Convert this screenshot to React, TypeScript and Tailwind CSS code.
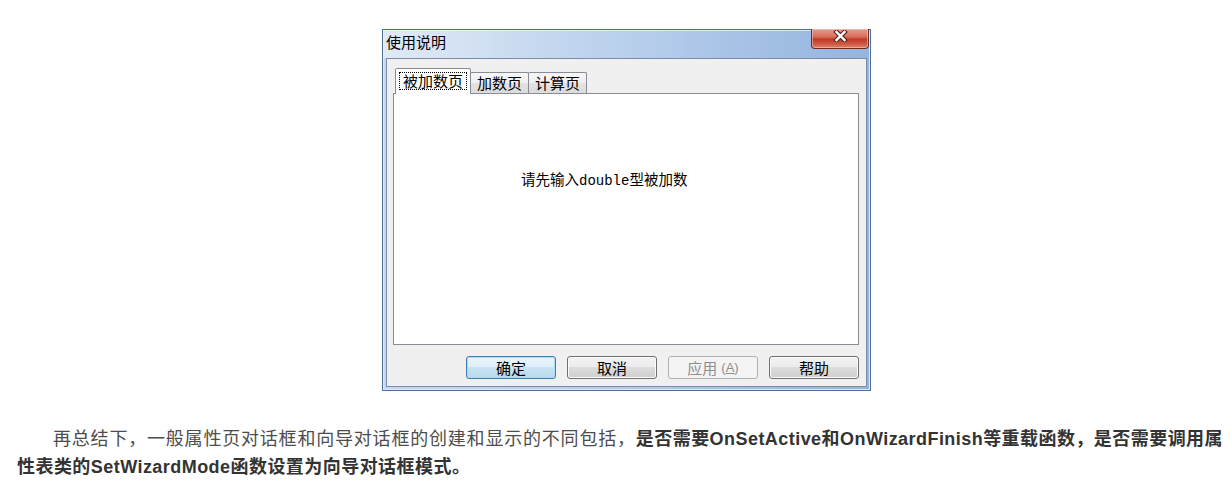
import React from "react";

const cjk = "font-['Noto_Sans_CJK_SC','Liberation_Sans',sans-serif]";

function CloseGlyph() {
  return (
    <svg width="15" height="12" viewBox="0 0 15 12">
      <path d="M3.5 2 L11.5 10 M11.5 2 L3.5 10" stroke="#5a2a24" strokeWidth="4.6" strokeLinecap="square" fill="none" />
      <path d="M3.5 2 L11.5 10 M11.5 2 L3.5 10" stroke="#ffffff" strokeWidth="2.4" strokeLinecap="square" fill="none" />
    </svg>
  );
}

function Btn({ children, kind }: { children: React.ReactNode; kind?: "default" | "disabled" }) {
  const base =
    "w-[90px] h-[23px] rounded-[3px] border flex items-center justify-center text-[15px] leading-[18px]";
  if (kind === "default")
    return (
      <div
        className={`${base} border-[#3c7fb1] text-black bg-[linear-gradient(#eaf5fb,#dcedf8_50%,#c8e2f2_50%,#b9d9ee)] shadow-[inset_0_0_0_1px_#a8dcf7]`}
      >
        {children}
      </div>
    );
  if (kind === "disabled")
    return (
      <div className={`${base} border-[#adb2b5] text-[#8e8e8e] bg-[#f4f4f4]`}>{children}</div>
    );
  return (
    <div
      className={`${base} border-[#707070] text-black bg-[linear-gradient(#f2f2f2,#ebebeb_50%,#dddddd_50%,#cfcfcf)] shadow-[inset_0_0_0_1px_#fbfbfb]`}
    >
      {children}
    </div>
  );
}

export default function App() {
  return (
    <div className={`w-[1232px] h-[488px] bg-white overflow-hidden ${cjk}`}>
      {/* dialog window */}
      <div className="ml-[382px] mt-[29px] w-[489px] h-[362px] flex flex-col border border-[#4d6f9f] bg-[linear-gradient(90deg,#c7d9f0,#b2cbea_55%,#95b4df)] shadow-[inset_0_0_0_1px_#dbe8f7]">
        {/* title bar */}
        <div className="h-[28px] flex justify-between pl-[3px] pr-[1px] bg-[linear-gradient(90deg,rgba(255,255,255,0.45),rgba(255,255,255,0.1)_40%,rgba(255,255,255,0)_70%)]">
          <div className="text-[15px] leading-[18px] text-black pt-[3px]">使用说明</div>
          <div className="-mt-px w-[58px] h-[20px] rounded-b-[4px] border border-t-0 border-[#6e2b22] bg-[linear-gradient(#e49a8c,#d8705c_40%,#c13a24_55%,#cf5a44_80%,#dc8672)] shadow-[inset_0_0_0_1px_rgba(255,210,200,0.5)] flex items-start justify-center pt-[1px]">
            <CloseGlyph />
          </div>
        </div>
        {/* client area */}
        <div className="flex-1 mx-[3px] mb-[3px] border border-[#7a8ca6] bg-[#f0f0f0] flex flex-col pl-[6px] pr-[7px] pt-[9px] pb-[7px]">
          {/* tabs */}
          <div className="h-[25px] flex items-end pl-[2px] text-[15px] leading-[18px] text-black">
            <div className="relative z-10 -mb-px w-[76px] h-[26px] bg-white border border-b-0 border-[#898c95] rounded-t-[2px] flex items-start justify-center pt-[3px]">
              <span className="border border-dotted border-black px-[3px] h-[18px] flex items-center">被加数页</span>
            </div>
            <div className="-ml-px w-[59px] h-[21px] border border-b-0 border-[#898c95] rounded-t-[2px] bg-[linear-gradient(#f7f7f7,#efefef_50%,#e3e3e3_50%,#dcdcdc)] flex items-center justify-center">
              加数页
            </div>
            <div className="-ml-px w-[59px] h-[21px] border border-b-0 border-[#898c95] rounded-t-[2px] bg-[linear-gradient(#f7f7f7,#efefef_50%,#e3e3e3_50%,#dcdcdc)] flex items-center justify-center">
              计算页
            </div>
          </div>
          {/* panel */}
          <div className="w-[466px] h-[252px] bg-white border border-[#898c95] pl-[127px] pt-[76px]">
            <div className="text-[14.5px] leading-[18px] text-black whitespace-nowrap">
              请先输入<span className="font-['Liberation_Mono',monospace] text-[14px]">double</span>型被加数
            </div>
          </div>
          {/* buttons */}
          <div className="mt-[11px] w-[466px] flex justify-end gap-[11px]">
            <Btn kind="default">确定</Btn>
            <Btn>取消</Btn>
            <Btn kind="disabled">
              <span>应用</span>
              <span className="ml-[4px] text-[13px] font-['Liberation_Sans',sans-serif]">
                (<span className="underline">A</span>)
              </span>
            </Btn>
            <Btn>帮助</Btn>
          </div>
        </div>
      </div>

      {/* article paragraph */}
      <p className="mt-[34px] ml-[17px] w-[1215px] whitespace-nowrap text-[18px] leading-[28px] tracking-[0.8px] text-[#4d4d4d] indent-[36px] font-['Liberation_Sans','Noto_Sans_CJK_SC',sans-serif]">
        再总结下，一般属性页对话框和向导对话框的创建和显示的不同包括，
        <b className="font-bold text-[#333333] tracking-[0.45px]">
          是否需要OnSetActive和OnWizardFinish等重载函数，是否需要调用属
          <br />
          性表类的SetWizardMode函数设置为向导对话框模式。
        </b>
      </p>
    </div>
  );
}
